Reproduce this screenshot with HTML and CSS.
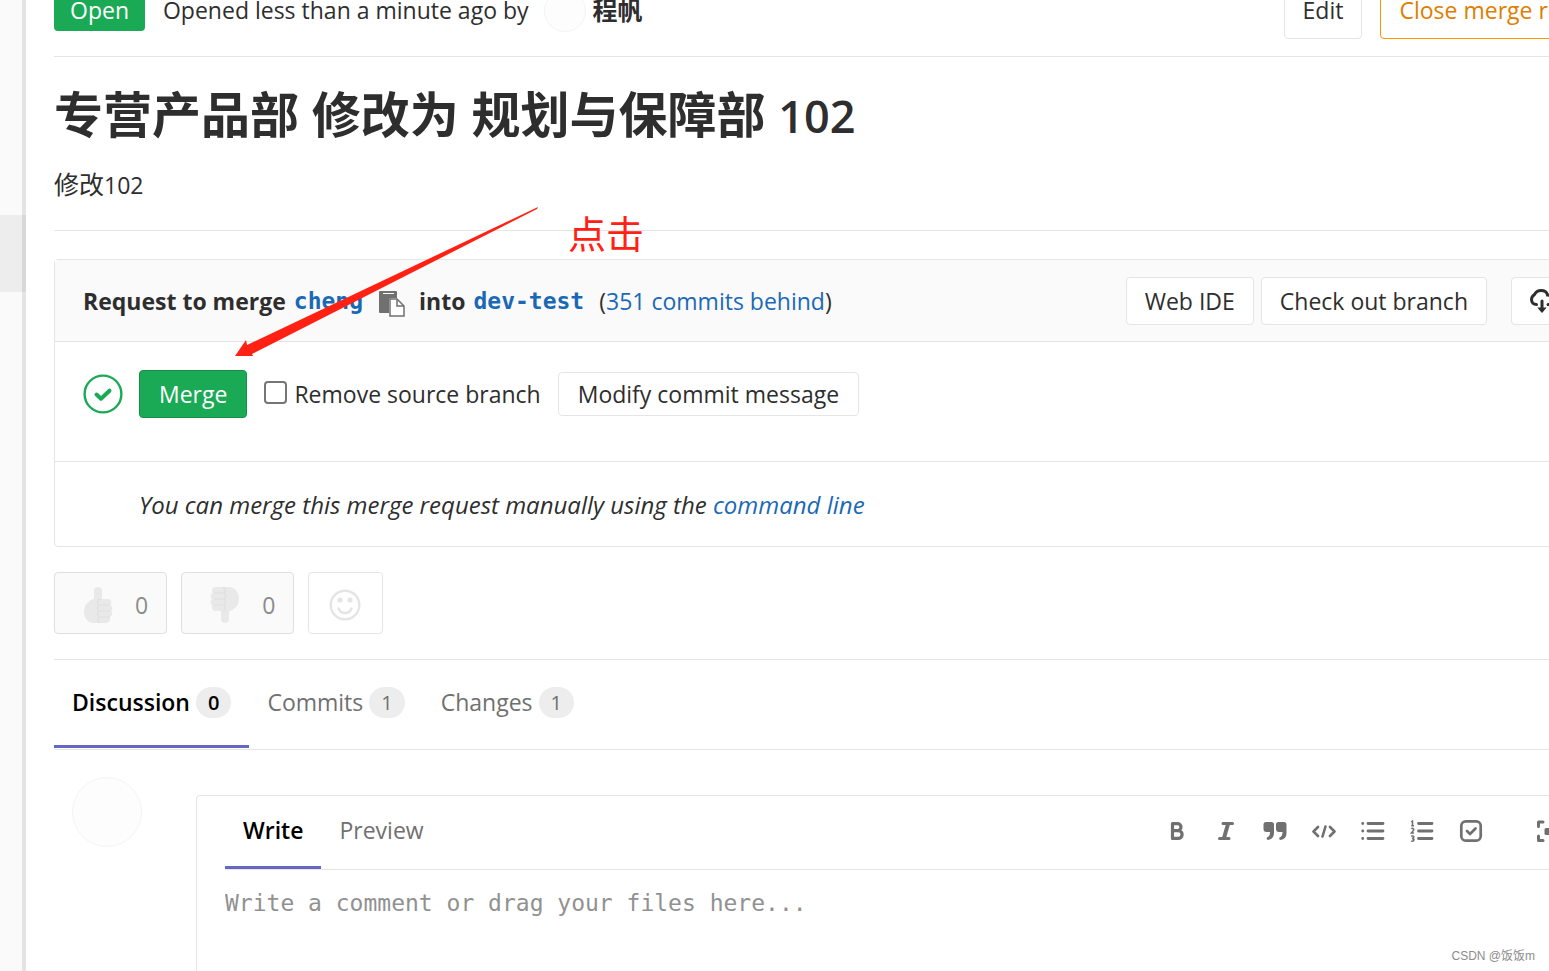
FILE: index.html
```
<!DOCTYPE html>
<html lang="en">
<head>
  <meta charset="UTF-8">
  <meta name="viewport" content="width=device-width, initial-scale=1.0">
  <title>Merge Request</title>
  <link rel="stylesheet" href="styles.css">
</head>
<body>

<div class="layout">
  <aside class="sidebar">
    <div class="sidebar-active"></div>
  </aside>

  <main class="content">
    <header class="detail-header">
      <span class="status">Open</span>
      <span class="opened">Opened less than a minute ago by</span>
      <span class="avatar avatar-small"></span>
      <strong class="author">程帆</strong>
      <div class="header-actions">
        <button class="btn btn-large">Edit</button>
        <button class="btn btn-large btn-close">Close merge request</button>
      </div>
    </header>

    <section class="description">
      <h1>专营产品部 修改为 规划与保障部 <span class="num">102</span></h1>
      <p><span class="cjk">修改</span>102</p>
    </section>

    <section class="widget">
      <div class="widget-head">
        <strong>Request to merge</strong>
        <a href="#" class="branch">cheng</a>
        <button class="copy" aria-label="Copy branch name">
          <svg width="26" height="26" viewBox="0 0 26 26">
            <path d="M1 0h16a1 1 0 0 1 1 1v6h-6a2 2 0 0 0-2 2v13H1a1 1 0 0 1-1-1V1a1 1 0 0 1 1-1z" fill="#707070"/>
            <path d="M4 2h11v1H4z" fill="#fafafa"/>
            <path d="M11 8h7l7 7v10H11z" fill="#fff" stroke="#707070" stroke-width="1.5"/>
            <path d="M18 8v7h7" fill="none" stroke="#707070" stroke-width="1.5"/>
          </svg>
        </button>
        <strong>into</strong>
        <a href="#" class="branch">dev-test</a>
        <span class="behind">(<a href="#">351 commits behind</a>)</span>
        <div class="widget-actions">
          <button class="btn">Web IDE</button>
          <button class="btn">Check out branch</button>
          <button class="btn download" aria-label="Download">
            <svg width="24" height="24" viewBox="0 0 24 24" fill="none" stroke="#2e2e2e" stroke-width="3" stroke-linecap="round">
              <path d="M6.500 15.500C3.500 15.500 1.500 13.500 1.500 10.500C1.500 8 3 6.500 4.500 5.500C6 2.500 8 1.500 11 1.500C14.500 1.500 17 3.500 17.500 6C20.500 6 22.500 8 22.500 11C22.500 14 20.500 15.500 18 15.500"/>
              <path d="M12 12v9"/>
              <path d="M9.500 19.500L12 22.500L14.500 19.500z" fill="#2e2e2e" stroke-width="2"/>
            </svg>
            <svg width="12" height="8" viewBox="0 0 12 8"><path d="M0 0h12L6 7z" fill="#2e2e2e"/></svg>
          </button>
        </div>
      </div>

      <div class="widget-body">
        <svg class="check" width="40" height="40" viewBox="0 0 40 40" fill="none" stroke="#1aaa55">
          <circle cx="20" cy="20" r="18.400" stroke-width="2.400"/>
          <path d="M13.500 20.500l4.500 4.200 8.500-8" stroke-width="4" stroke-linecap="round" stroke-linejoin="round"/>
        </svg>
        <button class="btn btn-merge">Merge</button>
        <label class="remove"><input type="checkbox">Remove source branch</label>
        <button class="btn btn-modify">Modify commit message</button>
      </div>

      <p class="widget-foot">You can merge this merge request manually using the <a href="#">command line</a></p>
    </section>

    <section class="awards">
      <button class="award" aria-label="Thumbs up">
        <svg width="30" height="38" viewBox="0 0 30 38">
          <path d="M11 5a4 4 0 0 1 8 0v8h6c4 0 4 5 2 6c3 1 3 5 1 6c2 2 1 5-1 6c1 3-1 6-4 6H11C4 37 1 31 1 25c0-6 5-11 10-12z" fill="#e9e9e9"/>
          <path d="M17 13c-3 1-3 5-1 6c-2 1-2 5 0 6c-2 1-2 5 0 6c-2 2-1 5 1 6M17 19h10M17 25h10M17 31h10" fill="none" stroke="#dfdfdf" stroke-width="1.200"/>
        </svg>
        <span>0</span>
      </button>
      <button class="award" aria-label="Thumbs down">
        <svg width="30" height="38" viewBox="0 0 30 38">
          <path d="M11 33a4 4 0 0 0 8 0v-8c6-1 10-6 10-12c0-7-4-12-10-12H6C2 1 1 5 3 7c-3 1-3 5-1 6c-2 2-2 5 0 6c-1 3 1 6 4 6h5z" fill="#e9e9e9"/>
          <path d="M13 1c3 1 3 5 1 6c2 1 2 5 0 6c2 1 2 5 0 6c2 2 1 5-1 6M4 7h10M4 13h10M4 19h10" fill="none" stroke="#dfdfdf" stroke-width="1.200"/>
        </svg>
        <span>0</span>
      </button>
      <button class="award award-add" aria-label="Add reaction">
        <svg width="32" height="32" viewBox="0 0 32 32">
          <circle cx="16" cy="16" r="14.300" fill="none" stroke="#e5e5e5" stroke-width="2.400"/>
          <circle cx="11" cy="11" r="2.600" fill="#e5e5e5"/>
          <circle cx="21" cy="11" r="2.600" fill="#e5e5e5"/>
          <path d="M9.500 19.500c2 6 11 6 13 0" fill="none" stroke="#e5e5e5" stroke-width="2.400" stroke-linecap="round"/>
        </svg>
      </button>
    </section>

    <nav class="tabs">
      <a href="#" class="tab active">Discussion <span class="badge">0</span></a>
      <a href="#" class="tab">Commits <span class="badge">1</span></a>
      <a href="#" class="tab">Changes <span class="badge">1</span></a>
    </nav>

    <section class="comment">
      <span class="avatar"></span>
      <form class="editor">
        <div class="editor-head">
          <a href="#" class="mode active">Write</a>
          <a href="#" class="mode">Preview</a>
          <div class="toolbar">
            <button type="button" aria-label="Bold">
              <svg viewBox="0 0 24 24" fill="none" stroke="#707070" stroke-width="3.200" stroke-linejoin="round"><path d="M7.500 4.600h5a3.500 3.500 0 0 1 0 7h-5zM7.500 11.600h5.700a3.900 3.900 0 0 1 0 7.800H7.500z"/></svg>
            </button>
            <button type="button" aria-label="Italic">
              <svg viewBox="0 0 24 24" fill="none" stroke="#707070" stroke-linecap="round"><path d="M9 4.500h9.500M5.500 19.500H15" stroke-width="3"/><path d="M14 5l-4 14" stroke-width="4" stroke-linecap="butt"/></svg>
            </button>
            <button type="button" aria-label="Quote">
              <svg viewBox="0 0 24 24" fill="#707070"><path d="M3 3h5.500Q11 3 11 5.500V14q0 6-6 7-2-.500-1-2.500 3-1 3-5.500H3.500Q.500 13 .500 10V5.500Q.500 3 3 3zM15.500 3H21q2.500 0 2.500 2.500V14q0 6-6 7-2-.500-1-2.500 3-1 3-5.500H16q-3 0-3-3V5.500Q13 3 15.500 3z"/></svg>
            </button>
            <button type="button" aria-label="Code">
              <svg viewBox="0 0 24 24" fill="none" stroke="#707070" stroke-width="2.600" stroke-linecap="round" stroke-linejoin="round"><path d="M6 8l-4.500 4.500L6 17M18 8l4.500 4.500L18 17M13.500 7.500l-3 10"/></svg>
            </button>
            <button type="button" aria-label="Bulleted list">
              <svg viewBox="0 0 24 24" fill="none" stroke="#707070" stroke-width="2.800" stroke-linecap="round"><path d="M7 4.500h15M7 12h15M7 19.500h15M1.700 4.500h.1M1.700 12h.1M1.700 19.500h.1"/></svg>
            </button>
            <button type="button" aria-label="Numbered list">
              <svg viewBox="0 0 24 24" fill="none" stroke="#707070" stroke-width="2.800" stroke-linecap="round"><path d="M8.500 4.500H22M8.500 12H22M8.500 19.500H22"/><path d="M1.200 2.800L2.500 2v4.700M1.200 6.700H4M1.200 9.700c2-1 3.300.6 1.800 2.200l-1.800 2.200H4M1.200 17.200c3-.9 3.500 1.600.8 2.400c3 .2 2.500 3.200-.8 2.500" stroke-width="1.500" stroke-linecap="butt"/></svg>
            </button>
            <button type="button" aria-label="Task list">
              <svg viewBox="0 0 24 24" fill="none" stroke="#707070" stroke-width="2.700" stroke-linecap="round" stroke-linejoin="round"><rect x="2.300" y="2.300" width="19.400" height="19.400" rx="4.500"/><path d="M8 12l3 3 5.500-5.500"/></svg>
            </button>
            <button type="button" class="fullscreen" aria-label="Go full screen">
              <svg viewBox="0 0 24 24" fill="none" stroke="#707070" stroke-width="3" stroke-linecap="round" stroke-linejoin="round"><path d="M7 3H2.500v4.500M17 3h4.500v4.500M7 21.500H2.500V17M17 21.500h4.500V17"/><rect x="10" y="10.500" width="4" height="4" fill="#707070"/></svg>
            </button>
          </div>
        </div>
        <textarea aria-label="Comment" placeholder="Write a comment or drag your files here..."></textarea>
      </form>
    </section>
  </main>
</div>

<!-- annotation over the page -->
<svg class="arrow" width="304" height="151" viewBox="0 0 304 151">
  <path d="M303 0L302 2L17 147L18 149L0 149L11 133L12 138z" fill="#ff2113"/>
</svg>
<span class="note">点击</span>
<span class="watermark">CSDN @饭饭m</span>

</body>
</html>
```
FILE: styles.css
```
* {
  box-sizing: border-box;
}

body {
  margin: 0;
  height: 100vh;
  overflow: hidden;
  position: relative;
  font-family: "Open Sans", "Noto Sans CJK SC", sans-serif;
  font-size: 23px;
  line-height: 32px;
  color: #2e2e2e;
  background-color: #fff;
}

a {
  color: #1b69b6;
  text-decoration: none;
}

button {
  font: inherit;
  color: inherit;
  cursor: pointer;
}

p {
  margin: 0;
}

svg {
  display: block;
  flex-shrink: 0;
}

.layout {
  display: flex;
  height: 100vh;
}

.sidebar {
  width: 26px;
  flex-shrink: 0;
  padding-top: 215px;
  background-color: #fafafa;
  box-shadow: inset -4px 0 0 #e4e4e4;
}

.sidebar-active {
  height: 77px;
  background-color: rgba(0, 0, 0, 0.05);
}

/* the page is wider than the window */
.content {
  flex: 1 0 auto;
  width: calc(100% + 70px);
  padding-left: 28px;
}

.btn {
  height: 48px;
  padding: 0 18px;
  border: 1px solid #e5e5e5;
  border-radius: 4px;
  background-color: #fff;
  white-space: nowrap;
}

.btn-large {
  height: 56px;
}

.btn-close {
  color: #de7e00;
  border-color: #fc9403;
}

/* header */
.detail-header {
  display: flex;
  align-items: center;
  margin-top: -17px;
  padding: 0 5px 17px 0;
  border-bottom: 1px solid #e5e5e5;
  white-space: nowrap;
}

.status {
  height: 40px;
  padding: 3px 16px;
  border-radius: 4px;
  color: #fff;
  background-color: #1aaa55;
}

.opened {
  margin-left: 18px;
  padding-bottom: 3px;
}

.avatar {
  width: 70px;
  height: 70px;
  flex-shrink: 0;
  border: 1px solid #f4f4f4;
  border-radius: 50%;
  background-color: #fdfdfd;
}

.avatar-small {
  width: 42px;
  height: 42px;
  margin: 0 7px 0 15px;
}

.author {
  padding-bottom: 3px;
  font-size: 25px;
}

.btn-large {
  padding-bottom: 3px;
}

.header-actions {
  display: flex;
  gap: 18px;
  margin-left: auto;
}

/* title */
.description {
  height: 174px;
  border-bottom: 1px solid #e5e5e5;
}

h1 {
  margin: 0 0 22px;
  padding-top: 27px;
  font-size: 49px;
  line-height: 60px;
  font-weight: 700;
}

.num {
  font-size: 45px;
  font-weight: 600;
}

.cjk {
  font-size: 25px;
}

/* merge widget */
.widget {
  margin-top: 28px;
  border: 1px solid #e5e5e5;
  border-radius: 4px;
}

.widget-head {
  display: flex;
  align-items: center;
  height: 82px;
  padding: 0 49px 0 28px;
  background-color: #fafafa;
  border-bottom: 1px solid #e5e5e5;
  white-space: nowrap;
}

.widget-head strong {
  font-weight: 700;
}

.branch {
  margin: 0 8px;
  font-family: "DejaVu Sans Mono", monospace;
  font-weight: 700;
}

.copy {
  margin: 6px 14px 0 8px;
  padding: 0;
  border: 0;
  background: none;
}

.behind {
  margin-left: 7px;
}

.widget-actions {
  display: flex;
  gap: 7px;
  margin-left: auto;
}

.download {
  display: flex;
  align-items: center;
  gap: 10px;
  margin-left: 17px;
}

.widget-body {
  display: flex;
  align-items: center;
  height: 120px;
  padding: 0 28px 15px;
  border-bottom: 1px solid #e5e5e5;
}

.btn-merge {
  margin: 0 17px 0 16px;
  padding: 0 19px;
  color: #fff;
  border-color: #168f48;
  background-color: #1aaa55;
}

.remove {
  display: flex;
  align-items: center;
}

.remove input {
  appearance: none;
  width: 23px;
  height: 23px;
  margin: 0 7px 4px 0;
  border: 2px solid #767676;
  border-radius: 4px;
  background-color: #fff;
}

.remove input:checked {
  background-color: #1b69b6;
}

.btn-modify {
  height: 44px;
  margin-left: 17px;
  padding: 0 19px;
}

.widget-foot {
  padding: 27px 84px 25px;
  font-size: 24px;
  font-style: italic;
}

/* award emoji */
.awards {
  display: flex;
  gap: 14px;
  height: 113px;
  padding: 25px 0;
  border-bottom: 1px solid #e5e5e5;
}

.award {
  display: flex;
  align-items: center;
  gap: 22px;
  height: 62px;
  padding: 3px 18px 0 28px;
  border: 1px solid #dfdfdf;
  border-radius: 4px;
  color: #8c8c8c;
  background-color: #fafafa;
}

.award-add {
  padding: 3px 21px 0 20px;
  border-color: #e5e5e5;
  background-color: #fff;
}

/* tabs */
.tabs {
  display: flex;
  height: 90px;
  border-bottom: 1px solid #e5e5e5;
}

.tab {
  display: flex;
  gap: 6px;
  height: 88px;
  padding: 26px 18px 0;
  color: #707070;
}

.tab.active,
.mode.active {
  color: #000;
  font-weight: 600;
  border-bottom: 3px solid #6666c4;
}

.badge {
  height: 31px;
  margin-top: 1px;
  padding: 0 12px;
  border-radius: 16px;
  font-size: 20px;
  background-color: #ededed;
}

/* comment form */
.comment {
  display: flex;
  padding: 27px 0 0 18px;
}

.editor {
  flex: 1;
  margin: 18px 0 0 54px;
  padding: 0 28px;
  border: 1px solid #e5e5e5;
  border-radius: 4px;
}

.editor-head {
  display: flex;
  height: 74px;
  border-bottom: 1px solid #e5e5e5;
}

.mode {
  height: 73px;
  padding: 18px 18px 0;
  color: #707070;
}

.toolbar {
  display: flex;
  align-items: center;
  gap: 25px;
  margin: 0 56px 4px auto;
}

.toolbar button {
  width: 24px;
  height: 24px;
  padding: 0;
  border: 0;
  background: none;
}

.toolbar .fullscreen {
  margin-left: 28px;
}

textarea {
  display: block;
  width: 100%;
  height: 160px;
  padding: 17px 0;
  border: 0;
  outline: none;
  resize: none;
  font-family: "DejaVu Sans Mono", monospace;
  font-size: 23px;
  line-height: 32px;
}

textarea::placeholder {
  color: #919191;
}

/* annotation */
.arrow {
  position: absolute;
  left: 235px;
  top: 207px;
}

.note {
  position: absolute;
  left: 568px;
  top: 209px;
  font-size: 38px;
  line-height: 48px;
  color: #ff2113;
}

.watermark {
  position: absolute;
  right: 14px;
  bottom: 7px;
  font-family: "Liberation Sans", "Noto Sans CJK SC", sans-serif;
  font-size: 12px;
  line-height: 16px;
  color: #8c8c8c;
}
```
